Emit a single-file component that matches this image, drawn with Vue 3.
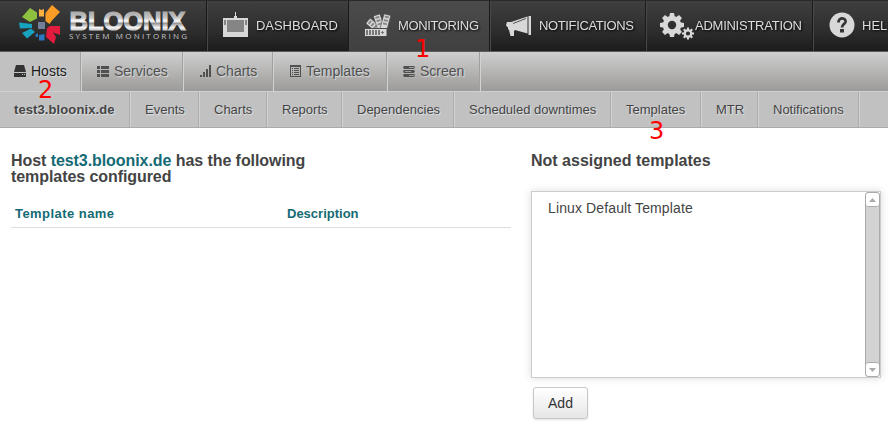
<script setup>
const mainNav = [
  { label: 'DASHBOARD', icon: 'dashboard', width: 142, text: 82, pad: 13, gap: 5 },
  { label: 'MONITORING', icon: 'monitoring', width: 141, text: 81, pad: 13, gap: 5, active: true },
  { label: 'NOTIFICATIONS', icon: 'notify', width: 156, text: 95, pad: 13, gap: 5 },
  { label: 'ADMINISTRATION', icon: 'gears', width: 167, text: 107, pad: 12, gap: 0 },
  { label: 'HELP', icon: 'help', width: 110, text: 34, pad: 13, gap: 5 },
]
const tabs = [
  { label: 'Hosts', icon: 'disk', width: 81, active: true },
  { label: 'Services', icon: 'list', width: 102 },
  { label: 'Charts', icon: 'bars', width: 90 },
  { label: 'Templates', icon: 'sheet', width: 114 },
  { label: 'Screen', icon: 'servers', width: 93 },
]
const subTabs = [
  { label: 'test3.bloonix.de', width: 130, active: true },
  { label: 'Events', width: 69 },
  { label: 'Charts', width: 68 },
  { label: 'Reports', width: 75 },
  { label: 'Dependencies', width: 112 },
  { label: 'Scheduled downtimes', width: 157 },
  { label: 'Templates', width: 90 },
  { label: 'MTR', width: 57 },
  { label: 'Notifications', width: 101 },
]
const blades = [-50, -18, 15]
const teeth = [0, 45, 90, 135, 180, 225, 270, 315]
</script>

<template>
  <div class="page">
    <header class="header">
      <div class="brand">
        <svg width="206" height="50" viewBox="0 1 206 50">
          <defs>
            <linearGradient id="metal" x1="0" y1="12" x2="0" y2="31" gradientUnits="userSpaceOnUse">
              <stop offset="0" stop-color="#aaa" />
              <stop offset=".3" stop-color="#c5c5c5" />
              <stop offset=".48" stop-color="#fff" />
              <stop offset=".6" stop-color="#999" />
              <stop offset=".82" stop-color="#f5f5f5" />
              <stop offset="1" stop-color="#bbb" />
            </linearGradient>
          </defs>
          <path fill="#8dc03f" d="M30 8l7 4.500v6l-7 3.500-8-5z" />
          <path fill="#fbb040" d="M39 9l2.500 1L44 9v7.500h-5z" />
          <path fill="#f99d27" d="M52 5l8 7-8.500 9-2 3-4-3V13z" />
          <path fill="#17a2c0" d="M19 22.500l13 1.500v4l-12 .5zM22 33l9-4.500 4 3.500-8 6.500z" />
          <path fill="#2a76c0" d="M35 35l3-2v4l-2 0zM39 35l5.500-1v6.500H39z" />
          <path fill="#e31b3d" d="M47 28l3-2h10v9l-7-2.500 3 4.500-2 7-8-7z" />
          <rect x="38" y="22" width="7" height="7" fill="#737f96" />
          <text x="69.500" y="30" class="brand-name" textLength="116" lengthAdjust="spacingAndGlyphs">BLOONIX</text>
          <text x="69" y="39" class="brand-sub" textLength="118">SYSTEM MONITORING</text>
        </svg>
      </div>
      <a
        v-for="item in mainNav"
        :key="item.label"
        class="main-item"
        :class="{ active: item.active }"
        :style="{ width: item.width + 'px', paddingLeft: item.pad + 'px', gap: item.gap + 'px' }"
      >
        <svg v-if="item.icon === 'dashboard'" class="big-icon" width="30" height="30" viewBox="0 0 30 30">
          <path d="M14 2h1v4h1v2h11v19H2V8h11V6h1z" />
          <path fill="#858585" d="M6 10h17v12H6zM3 10h2v5H3zM24 10h2v5h-2z" />
        </svg>
        <svg v-else-if="item.icon === 'monitoring'" class="big-icon" width="30" height="30" viewBox="0 0 30 30">
          <g v-for="angle in blades" :key="angle" :transform="`translate(19.5 23) rotate(${angle})`">
            <rect x="-3.500" y="-19" width="7" height="19" rx="1" stroke="#484848" stroke-width=".6" />
            <path fill="#888" d="M-2-17.500h4v2h-4zM-2-14h4v2h-4zM-2-10.500h4v2h-4z" />
          </g>
          <path fill="#484848" d="M1 18h23.500v9H1z" />
          <path d="M2 19h21.500v7H2z" />
          <path fill="#777" d="M3 20h2v5H3zM6 20h2v5H6zM9 20h2v5H9zM12 20h2v5h-2zM15 20h2v5h-2zM18 22h3v1h-3zM19 21h1v3h-1z" />
        </svg>
        <svg v-else-if="item.icon === 'notify'" class="big-icon" width="30" height="30" viewBox="0 0 30 30">
          <path d="M24.500 6H27v19h-2.500zM7 12L23.500 6.500v17L11 20l-1 1v5H6.500L5 20l-1-1v-2H3l-1-2 1-3h4z" />
          <path d="M9 13.500L22 8.500" fill="none" stroke="#333" stroke-width=".8" />
        </svg>
        <svg v-else-if="item.icon === 'gears'" class="big-icon" width="36" height="30" viewBox="0 0 36 30">
          <g transform="translate(13 15)">
            <path v-for="a in teeth" :key="a" :transform="`rotate(${a})`" d="M-3-7L-2-12h4l1 5z" />
            <circle r="6.700" fill="none" class="ring" stroke-width="5" />
          </g>
          <g transform="translate(29 23.500)">
            <path v-for="a in teeth" :key="a" :transform="`rotate(${a})`" d="M-1.200-3L-1-6h2l.2 3z" />
            <circle r="3.200" fill="none" class="ring" stroke-width="2.200" />
          </g>
        </svg>
        <svg v-else class="big-icon" width="30" height="30" viewBox="0 0 30 30">
          <circle cx="15" cy="15" r="12.500" />
          <path d="M11.500 12.500V12c0-5 8-4.500 7 0-.5 2-3.500 2.500-3.500 5.500" fill="none" stroke="#353535" stroke-width="2.800" />
          <path fill="#353535" d="M13 19h4v3.500h-4z" />
        </svg>
        <svg class="main-label" :width="item.text + 4" height="20">
          <text x="0" y="15" :textLength="item.text">{{ item.label }}</text>
        </svg>
      </a>
    </header>

    <nav class="tabs">
      <a v-for="tab in tabs" :key="tab.label" class="tab" :class="{ active: tab.active }" :style="{ width: tab.width + 'px' }">
        <svg class="tab-icon" width="12" height="12" viewBox="0 0 12 12">
          <path v-if="tab.icon === 'disk'" fill-rule="evenodd" d="M2 0h8l2 7H0zM0 8h12v4H0zM8 9h1v1H8zM10 9h1v1h-1z" />
          <path v-else-if="tab.icon === 'list'" d="M0 1h3v3H0zM4 1h8v3H4zM0 5h3v3H0zM4 5h8v3H4zM0 9h3v3H0zM4 9h8v3H4z" />
          <path v-else-if="tab.icon === 'bars'" d="M1 10h2v2H1zM4 7h2v5H4zM7 4h2v8H7zM10 0h2v12h-2z" />
          <path v-else-if="tab.icon === 'sheet'" fill-rule="evenodd" d="M1 0h11v12H1zM2 2v9h9V2zM3 3h1v1H3zM5 3h5v1H5zM3 5h1v1H3zM5 5h5v1H5zM3 7h1v1H3zM5 7h5v1H5zM3 9h1v1H3zM5 9h5v1H5z" />
          <path v-else fill-rule="evenodd" d="M1 1h10l1 1-1 2H1L0 2zM1 5h10l1 1-1 2H1L0 6zM1 9h10l1 1-1 2H1l-1-2zM6 2h5v.8H6zM2 6h6v.8H2zM6 10h5v.8H6z" />
        </svg>
        <span>{{ tab.label }}</span>
      </a>
    </nav>

    <nav class="subtabs">
      <a v-for="tab in subTabs" :key="tab.label" class="subtab" :class="{ active: tab.active }" :style="{ width: tab.width + 'px' }">{{ tab.label }}</a>
    </nav>

    <main class="content">
      <section class="left">
        <h2>Host <a>test3.bloonix.de</a> has the following<br>templates configured</h2>
        <div class="table-head">
          <span class="col-name">Template name</span>
          <span>Description</span>
        </div>
      </section>
      <section class="right">
        <h2>Not assigned templates</h2>
        <div class="listbox">
          <div class="option">Linux Default Template</div>
          <div class="scrollbar">
            <div class="arrow top"><svg width="7" height="4"><path d="M0 4L3.500 0 7 4z" /></svg></div>
            <div class="arrow bottom"><svg width="7" height="4"><path d="M0 0L3.500 4 7 0z" /></svg></div>
          </div>
        </div>
        <button class="add">Add</button>
      </section>
    </main>

    <span class="mark one">1</span>
    <span class="mark two">2</span>
    <span class="mark three">3</span>
  </div>
</template>

<style>
body { background: #fff; overflow: hidden; }
</style>

<style scoped>
.page {
  position: relative;
  width: 888px;
  height: 426px;
  overflow: hidden;
  font-family: "Liberation Sans", Arial, sans-serif;
  font-size: 14px;
  color: #444;
}
.page * { box-sizing: border-box; }
.header {
  display: flex;
  height: 52px;
  background: linear-gradient(#3f3f3f, #2d2d2d 60%, #1c1c1c);
  border-top: 1px solid #292929;
  border-bottom: 1px solid #5c5c5c;
}
.brand { width: 207px; flex: none; border-right: 1px solid #181818; }
.brand svg { display: block; }
.brand-name {
  font: bold 25px "Liberation Sans", sans-serif;
  fill: url(#metal);
  stroke: url(#metal);
  stroke-width: 1.2px;
}
.brand-sub { font: 8px "Open Sans", sans-serif; fill: #c4c4c4; }
.main-item {
  display: flex;
  flex: none;
  align-items: center;
  border-left: 1px solid #484848;
  border-right: 1px solid #1a1a1a;
  padding-bottom: 2px;
}
.main-item.active { background: linear-gradient(#4b4b4b, #404040); }
.big-icon { fill: #d8d8d8; flex: none; }
.ring { stroke: #d8d8d8; }
.main-label {
  flex: none;
  font-size: 13px;
  fill: #ddd;
  overflow: visible;
  filter: drop-shadow(1px 1px 1px #000);
}
.tabs {
  display: flex;
  height: 39px;
  background: linear-gradient(#cfcfcf, #9c9b99);
}
.tab {
  display: flex;
  flex: none;
  align-items: center;
  gap: 5px;
  padding-left: 14px;
  border-right: 1px solid #a0a0a0;
  box-shadow: 1px 0 0 #d2d2d2;
  color: #505050;
  text-shadow: 1px 1px 1px #ddd;
}
.tab + .tab { padding-left: 16px; }
.tab.active { background: #c1c1c1; color: #1a1a1a; }
.tab span { padding-bottom: 2px; }
.tab-icon { display: block; fill: #505050; flex: none; margin-bottom: 1px; }
.tab.active .tab-icon { fill: #333; }
.subtabs {
  display: flex;
  height: 37px;
  background: #c1c1c1;
  border-top: 1px solid #d0d0d0;
  border-bottom: 1px solid #aaa;
  font-size: 13px;
}
.subtab {
  flex: none;
  padding-left: 15px;
  line-height: 36px;
  white-space: nowrap;
  border-right: 1px solid #acacac;
  box-shadow: 1px 0 0 #d2d2d2;
  text-shadow: 1px 1px 1px #e5e5e5;
}
.subtab.active { font-weight: bold; padding-left: 14px; letter-spacing: 0.1px; }
.content { display: flex; gap: 20px; padding: 25px 0 0 11px; }
.left { width: 500px; }
h2 { margin: 0; font-size: 16px; line-height: 16px; height: 38px; }
h2 a { color: #146a74; }
.left h2 { letter-spacing: -0.07px; }
.table-head {
  display: flex;
  height: 37px;
  padding: 14px 4px 0;
  border-bottom: 1px solid #ddd;
  color: #146a74;
  font-size: 13px;
  font-weight: bold;
  line-height: 17px;
}
.col-name { width: 272px; letter-spacing: 0.45px; }
.listbox {
  display: flex;
  justify-content: space-between;
  width: 350px;
  height: 187px;
  border: 1px solid #ccc;
  box-shadow: 0 0 8px rgba(0, 0, 0, 0.15);
}
.option { padding: 8px 0 0 16px; line-height: 16px; letter-spacing: 0.12px; }
.scrollbar {
  display: flex;
  flex-direction: column;
  justify-content: space-between;
  width: 15px;
  height: 185px;
  background: #d3d3d3;
  border: 1px solid #aaa;
  border-radius: 3px;
}
.arrow { display: flex; align-items: center; justify-content: center; height: 14px; background: #fff; border-radius: 3px; }
.arrow.top { border-bottom: 1px solid #aaa; }
.arrow.bottom { border-top: 1px solid #aaa; }
.arrow path { fill: #aaa; }
.add {
  width: 55px;
  height: 32px;
  margin: 9px 0 0 2px;
  padding: 0;
  border: 1px solid #c8c8c8;
  border-radius: 3px;
  background: linear-gradient(#fff, #e6e6e6);
  box-shadow: 0 1px 2px rgba(0, 0, 0, 0.12);
  color: #333;
  font: 14px "Liberation Sans", sans-serif;
}
.mark { position: absolute; font: 24px/28px "DejaVu Sans", sans-serif; color: #f00; }
.one { left: 415px; top: 35px; }
.two { left: 38px; top: 76px; }
.three { left: 649px; top: 117px; }
</style>
